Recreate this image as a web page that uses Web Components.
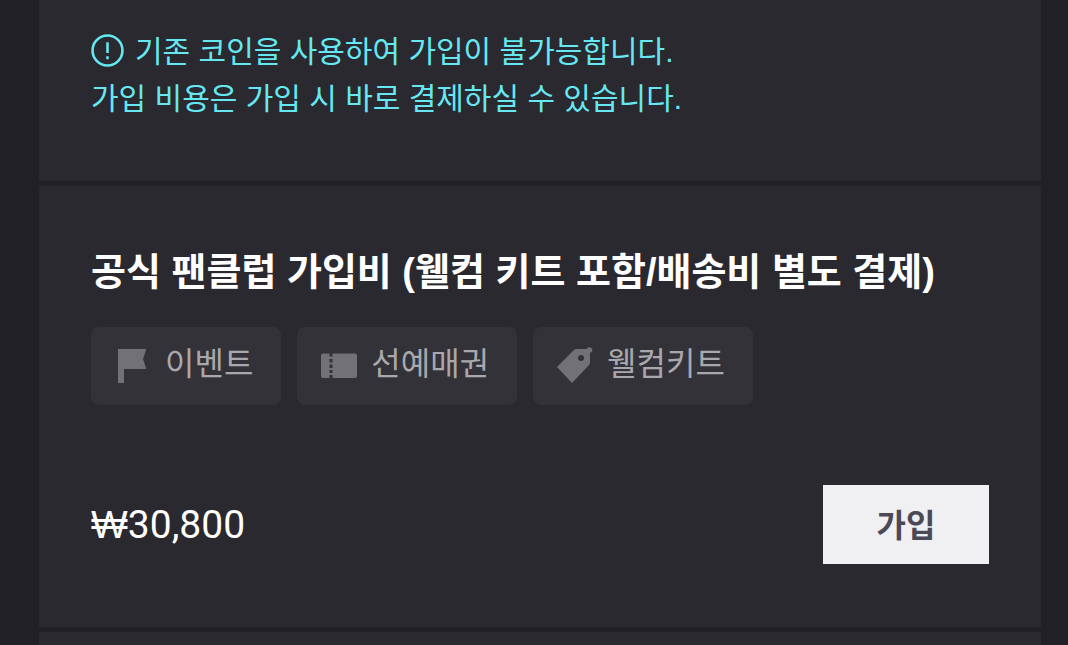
<!DOCTYPE html>
<html lang="ko">
<head>
<meta charset="utf-8">
<meta name="viewport" content="width=device-width, initial-scale=1">
<title>공식 팬클럽</title>
<style>
  body {
    margin: 0;
    background: #212025;
    color: #fff;
    font-family: Roboto, "Noto Sans CJK KR", sans-serif;
  }
</style>
</head>
<body>
<club-page>
  <club-notice>기존 코인을 사용하여 가입이 불가능합니다.<br>가입 비용은 가입 시 바로 결제하실 수 있습니다.</club-notice>
  <club-product>
    <span slot="title">공식 팬클럽 가입비 (웰컴 키트 포함/배송비 별도 결제)</span>
    <club-tag icon="flag">이벤트</club-tag>
    <club-tag icon="ticket">선예매권</club-tag>
    <club-tag icon="label">웰컴키트</club-tag>
    <span slot="currency">₩</span>
    <span slot="price">30,800</span>
    <span slot="action">가입</span>
  </club-product>
  <club-panel></club-panel>
</club-page>

<script>
let icons = {
  flag: '<path d="M3 2H30.500Q31.500 2 31 3L28 12L31 21Q31.500 22 30.500 22H9V36H3Z"/>',
  ticket: '<path d="M2 6.500H8.500V9.500H11.500V6.500H34Q36 6.500 36 8.500V29Q36 31 34 31H11.500V28H8.500V31H2Q0 31 0 29V8.500Q0 6.500 2 6.500Z"/><path class="cut" d="M8.500 12h3v3.500h-3zM8.500 17.500h3v3.500h-3zM8.500 23h3v3h-3z"/>',
  label: '<path fill-rule="evenodd" d="M0 20L17 3Q18 2 20 2H29.500L31 .5A3 3 0 0 1 35 4.500L33 6V15Q33 17 32 18L15 36ZM24 8A3 3 0 1 0 24 14A3 3 0 1 0 24 8Z"/>'
}

class ClubElement extends HTMLElement {
  constructor() {
    super();
    let root = this.attachShadow({ mode: 'open' });
    root.innerHTML = this.render_();
  }
}

class Page extends ClubElement {
  render_() {
    return `
      <style>
        :host { display: block; padding: 0 27px 0 39px; height: 100vh; overflow: hidden; box-sizing: border-box; }
        main { display: flex; flex-direction: column; gap: 5px; min-height: 100%; }
        ::slotted(:last-child) { flex: 1; }
      </style>
      <main><slot></slot></main>`;
  }
}

class Panel extends ClubElement {
  render_() {
    return `
      <style>:host { display: block; background: #2a292f; }</style>
      <slot></slot>`;
  }
}

class Notice extends ClubElement {
  render_() {
    return `
      <style>
        :host { display: block; padding: 28px 52px 59px; background: #2a292f; }
        p { margin: 0; color: #66e8f2; font-family: "Liberation Sans", "Noto Sans CJK KR", sans-serif; font-size: 30px; line-height: 47px; }
        svg { width: 33px; height: 33px; margin-right: 11px; vertical-align: -5px; }
      </style>
      <p><svg viewBox="0 0 32 32" fill="none" stroke="currentColor" stroke-width="2.500" aria-hidden="true"><circle cx="16" cy="16" r="14.500"/><path d="M16 8V18.500M16 21.500V24.500"/></svg><slot></slot></p>`;
  }
}

class Product extends ClubElement {
  render_() {
    return `
      <style>
        :host { display: block; padding: 58px 52px 63px; background: #2a292f; }
        h2 { margin: 0; font-family: "Liberation Sans", "Noto Sans CJK KR", sans-serif; font-size: 38px; font-weight: 700; line-height: 56px; }
        .tags { display: flex; flex-wrap: wrap; gap: 16px; margin-top: 27px; }
        .buy { display: flex; align-items: center; justify-content: space-between; margin-top: 80px; }
        .price { font-size: 39px; line-height: 56px; }
        .currency { font-family: "Liberation Sans", sans-serif; }
        button {
          min-width: 166px;
          height: 79px;
          padding: 0 52px 4px;
          border: 0;
          background: #f0f0f2;
          color: #4b4956;
          font: inherit;
          font-size: 32px;
          font-weight: 700;
          cursor: pointer;
        }
      </style>
      <h2><slot name="title"></slot></h2>
      <div class="tags"><slot></slot></div>
      <div class="buy">
        <span class="price"><span class="currency"><slot name="currency"></slot></span><slot name="price"></slot></span>
        <button type="button"><slot name="action"></slot></button>
      </div>`;
  }
}

class Tag extends ClubElement {
  render_() {
    return `
      <style>
        :host {
          display: flex;
          align-items: center;
          gap: 12px;
          height: 78px;
          padding: 0 28px 0 24px;
          box-sizing: border-box;
          border-radius: 8px;
          background: #333238;
          color: #a9a8ac;
          font-size: 32px;
          line-height: 48px;
        }
        span { padding-bottom: 4px; }
        svg { width: 38px; height: 38px; fill: #727176; }
        .cut { fill: #333238; }
      </style>
      <svg viewBox="0 0 38 38" aria-hidden="true">${icons[this.getAttribute('icon')] || ''}</svg>
      <span><slot></slot></span>`;
  }
}

customElements.define('club-page', Page);
customElements.define('club-panel', Panel);
customElements.define('club-notice', Notice);
customElements.define('club-product', Product);
customElements.define('club-tag', Tag);
</script>
</body>
</html>
